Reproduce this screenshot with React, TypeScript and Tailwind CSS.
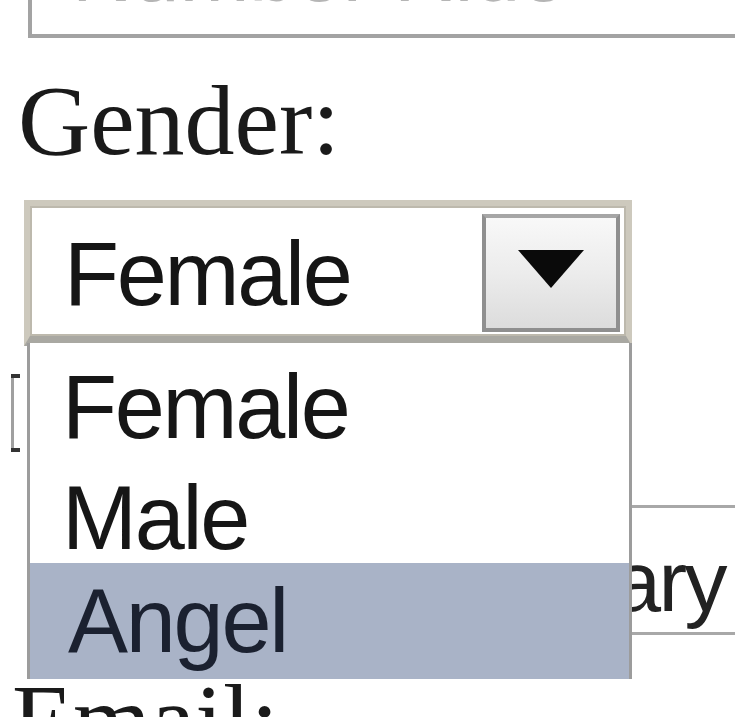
import React from "react";

export default function App() {
  const serif = { fontFamily: '"Liberation Serif", "Times New Roman", serif' };
  const sans = { fontFamily: '"Liberation Sans", Arial, sans-serif' };
  return (
    <div className="relative w-[735px] h-[717px] overflow-hidden bg-white">
      {/* top text input, mostly cut off */}
      <div className="ml-[28px] mt-[-60px] h-[98px] border-[4px] border-r-0 border-[#a3a3a3] bg-white overflow-hidden">
        <div className="pl-[40px] mt-[-14px] text-[84px] leading-[84px] text-[#b5b5b5]" style={sans}>
          Number Ride
        </div>
      </div>

      {/* Gender label */}
      <div className="ml-[18px] mt-[33px] text-[100px] leading-[100px] text-[#1a1a1a]" style={serif}>
        Gender:
      </div>

      {/* select */}
      <div className="ml-[24px] mt-[29px] w-[608px] h-[146px] border-[6px] border-[#cdc9bd] border-b-[10px] border-b-[#a9a8a2] bg-white flex shadow-[inset_0_0_0_2px_#bdb9ad]">
        <div className="flex-1 pl-[34px] pt-[18px] text-[90px] leading-[100px] text-[#151515] tracking-[-0.025em]" style={sans}>
          Female
        </div>
        <div className="mt-[8px] mr-[6px] mb-[4px] w-[138px] border-[4px] border-[#8f8f8f] border-t-[#a6a6a6] bg-gradient-to-b from-[#f8f8f8] via-[#ececec] to-[#dcdcdc] flex items-start justify-center pt-[32px]">
          <svg width="66" height="38" viewBox="0 0 66 38">
            <polygon points="0,0 66,0 33,38" fill="#0a0a0a" />
          </svg>
        </div>
      </div>

      {/* content behind the open list */}
      <div className="ml-[11px] mt-[28px] w-[9px] h-[78px] border-l-[3px] border-[#a0a0a0] relative">
        <div className="absolute left-[-3px] top-0 w-[9px] h-[4px] bg-[#333]" />
        <div className="absolute left-[-3px] bottom-0 w-[9px] h-[4px] bg-[#333]" />
      </div>
      <div className="ml-[300px] mt-[53px] h-[130px] border-y-[3px] border-[#a8a8a8] flex items-start justify-end pr-[10px] overflow-hidden">
        <div className="mt-[30px] text-[86px] leading-[86px] text-[#222] tracking-[-0.03em]" style={sans}>
          Primary
        </div>
      </div>
      <div className="ml-[12px] mt-[35px] text-[100px] leading-[100px] text-[#1a1a1a]" style={serif}>
        Email:
      </div>

      {/* open dropdown list */}
      <div className="absolute left-[27px] top-[343px] w-[605px] h-[336px] border-x-[3px] border-[#9c9c9c] bg-white flex flex-col" style={sans}>
        <div className="h-[110px] pl-[32px] pt-[14px] text-[90px] leading-[100px] text-[#161616] tracking-[-0.025em]">Female</div>
        <div className="h-[110px] pl-[32px] pt-[15px] text-[90px] leading-[100px] text-[#161616] tracking-[-0.025em]">Male</div>
        <div className="flex-1 pl-[38px] pt-[8px] bg-[#a9b3c7] text-[90px] leading-[100px] text-[#1b2130] tracking-[-0.025em]">Angel</div>
      </div>
    </div>
  );
}
